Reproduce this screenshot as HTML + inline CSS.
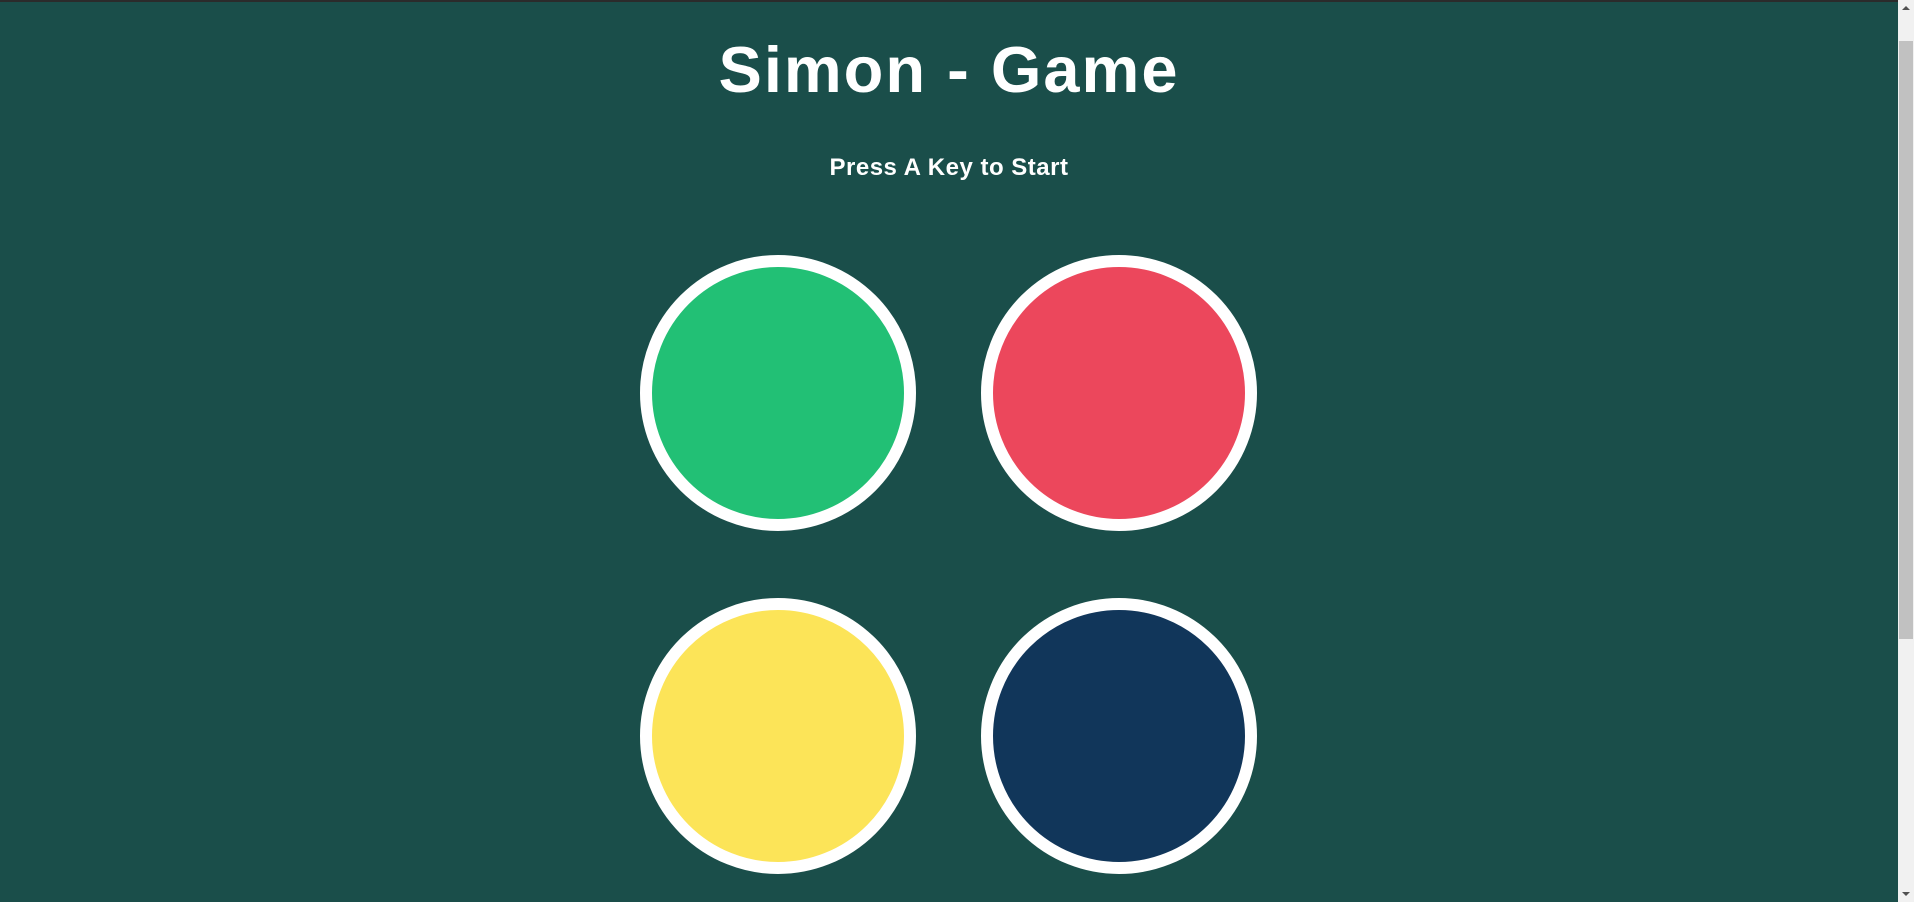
<!DOCTYPE html>
<html><head><style>
html,body{margin:0;padding:0;}
body{width:1914px;height:902px;background:#1a4e4a;position:relative;overflow:hidden;font-family:"Liberation Sans",sans-serif;color:#fff;}
.top{position:absolute;left:0;top:0;width:1914px;height:2px;background:#2b2b2b;}
h1{position:absolute;left:0;width:1898px;top:30px;margin:0;text-align:center;font-size:65px;font-weight:bold;letter-spacing:2px;line-height:80px;}
h2{position:absolute;left:0;width:1898px;top:153px;margin:0;text-align:center;font-size:24px;font-weight:bold;letter-spacing:0.5px;line-height:30px;}
.c{position:absolute;width:252px;height:252px;border:12px solid #fff;border-radius:50%;}
.sb{position:absolute;right:0;top:0;width:16px;height:902px;background:#f1f1f1;}
.th{position:absolute;right:1px;top:41px;width:14px;height:598px;background:#c1c1c1;}
</style></head><body>
<div class="top"></div>
<h1>Simon - Game</h1>
<h2>Press A Key to Start</h2>
<div class="c" style="left:640px;top:255px;background:#22c075"></div>
<div class="c" style="left:981px;top:255px;background:#ec475c"></div>
<div class="c" style="left:640px;top:598px;background:#fce458"></div>
<div class="c" style="left:981px;top:598px;background:#11365a"></div>
<div class="sb"><div class="th"></div>
<div style="position:absolute;left:4px;top:6px;width:0;height:0;border-left:4px solid transparent;border-right:4px solid transparent;border-bottom:4px solid #505050"></div>
<div style="position:absolute;left:4px;bottom:6px;width:0;height:0;border-left:4px solid transparent;border-right:4px solid transparent;border-top:4px solid #505050"></div>
</div>
</body></html>
